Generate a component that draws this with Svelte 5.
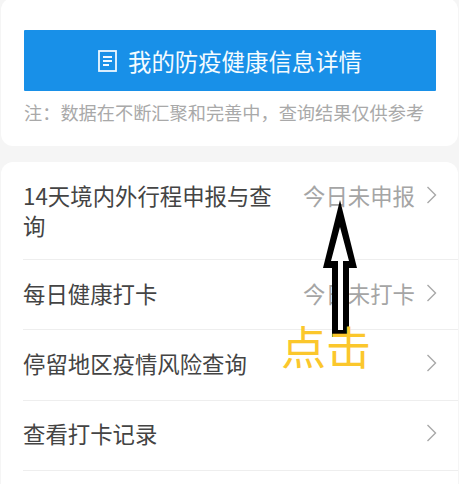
<script>
    const rows = [
        { title: "14天境内外行程申报与查询", status: "今日未申报", tall: true },
        { title: "每日健康打卡", status: "今日未打卡" },
        { title: "停留地区疫情风险查询", status: "" },
        { title: "查看打卡记录", status: "" }
    ];
</script>

<div class="page">
    <section class="card top">
        <button class="detail-button">
            <svg class="doc-icon" viewBox="0 0 19 22" width="19" height="22" fill="none" stroke="#eef8ff" stroke-width="1.8">
                <rect x="1" y="1" width="17" height="20" />
                <path d="M5 7h9M5 11h9M5 15h6" />
            </svg>
            <span>我的防疫健康信息详情</span>
        </button>
        <p class="note">注&#xFF1A;数据在不断汇聚和完善中&#xFF0C;查询结果仅供参考</p>
    </section>

    <section class="card list">
        {#each rows as row}
            <div class="row" class:tall={row.tall}>
                <span class="title">{row.title}</span>
                {#if row.status}
                    <span class="status">{row.status}</span>
                {/if}
                <svg class="chevron" viewBox="0 0 11 18" width="11" height="18" fill="none" stroke="#a8a8a8" stroke-width="1.4">
                    <path d="M1.5 1L9.5 9L1.5 17" />
                </svg>
            </div>
        {/each}
    </section>

    <svg class="arrow" viewBox="0 0 34 137" width="34" height="137">
        <path d="M17 0L34 68H26V137H9V68H0Z" fill="#000" />
        <path d="M17 27L26 61H20V130H15V61H8Z" fill="#fff" />
    </svg>
    <span class="tap">点击</span>
</div>

<style>
    :global(body) {
        margin: 0;
        background: #f5f5f5;
    }

    .page {
        position: relative;
        width: 459px;
        height: 484px;
        overflow: hidden;
        background: #f5f5f5;
        font-family: "Noto Sans CJK SC", "Liberation Sans", sans-serif;
    }

    .card {
        background: #fff;
        border-radius: 12px;
        margin: 0 1px;
    }

    .top {
        height: 148px;
        margin-top: -2px;
        margin-bottom: 16px;
        padding: 32px 22px 0 23px;
        box-sizing: border-box;
    }

    .detail-button {
        display: flex;
        align-items: center;
        justify-content: center;
        gap: 11px;
        width: 412px;
        height: 61px;
        padding: 0;
        border: none;
        border-radius: 1px;
        background: #1890e8;
        color: #f4fbff;
        font: inherit;
        font-size: 23.4px;
    }

    .note {
        margin: 8px 0 0;
        font-size: 18.2px;
        line-height: 26px;
        color: #a9a9a9;
        white-space: nowrap;
    }

    .list {
        padding-left: 22px;
        height: 340px;
    }

    .row {
        display: flex;
        align-items: center;
        height: 70.4px;
        padding-right: 21px;
        padding-bottom: 4px;
        border-bottom: 1px solid #eeeeee;
        box-sizing: border-box;
        font-size: 22.4px;
    }

    .row.tall {
        height: 98px;
        align-items: flex-start;
        padding-top: 18px;
        padding-bottom: 0;
    }

    .row.tall .chevron {
        margin-top: 6px;
    }

    .title {
        flex: 1;
        color: #444;
        line-height: 30px;
        margin-right: 28px;
    }

    .status {
        color: #a5a5a5;
        line-height: 30px;
        margin-right: 11px;
        white-space: nowrap;
    }

    .chevron {
        flex: none;
    }

    .arrow {
        position: absolute;
        left: 323px;
        top: 200px;
    }

    .tap {
        position: absolute;
        left: 281px;
        top: 321px;
        font-size: 45px;
        line-height: 50px;
        color: #fbc72c;
        white-space: nowrap;
    }
</style>
